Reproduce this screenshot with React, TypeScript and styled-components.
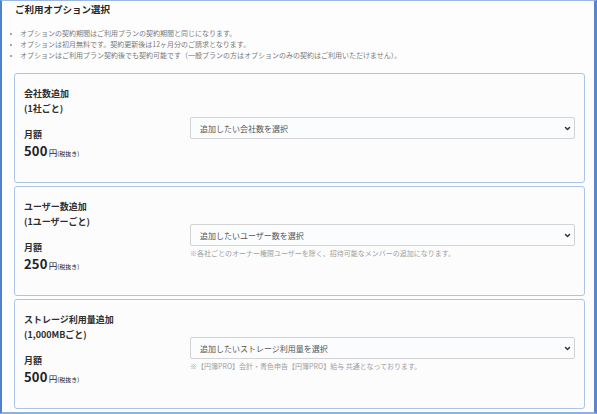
import React from "react";
import styled, { createGlobalStyle } from "styled-components";

const Global = createGlobalStyle`
  html, body { margin: 0; padding: 0; background: #ffffff; }
  body { font-family: "Noto Sans CJK JP", "Noto Sans", sans-serif; }
  * { box-sizing: border-box; }
`;

const Frame = styled.div`
  width: 597px;
  height: 414px;
  overflow: hidden;
  background: #fdfdfd;
  border-left: 2px solid #4f82cc;
  border-top: 1px solid #9bb8e4;
  border-right: 3px solid #5a86c8;
  border-bottom: 2px solid #8fb0e0;
  padding: 1px 9px 0 12px;
`;

const Heading = styled.h2`
  margin: 0;
  padding-left: 1px;
  font-size: 9.5px;
  line-height: 14px;
  font-weight: 700;
  color: #262626;
`;

const Notes = styled.ul`
  list-style: none;
  margin: 12px 0 12px -4px;
  padding: 0;
`;

const NoteItem = styled.li`
  display: flex;
  align-items: center;
  gap: 8px;
  height: 11px;
  font-size: 7px;
  line-height: 11px;
  color: #7a7a7a;
  white-space: nowrap;
`;

const Dot = styled.span`
  width: 2px;
  height: 2px;
  border-radius: 50%;
  background: #8a8a8a;
  flex: none;
`;

const Cards = styled.div`
  display: flex;
  flex-direction: column;
  gap: 3px;
`;

const Card = styled.section`
  display: grid;
  grid-template-columns: 166px 1fr;
  height: 110px;
  padding: 12px 9px 0 9px;
  border: 1px solid #abc5e8;
  border-radius: 3px;
  background: #fcfcfc;
  flex: none;
`;

const Info = styled.div`
  display: flex;
  flex-direction: column;
  color: #2e2e2e;
`;

const Label = styled.div`
  height: 15px;
  font-size: 9px;
  line-height: 15px;
  font-weight: 700;
`;

const Monthly = styled(Label)`
  margin-top: 11px;
`;

const Price = styled.div`
  display: flex;
  align-items: baseline;
  height: 18px;
  line-height: 18px;
  color: #222;
`;

const Amount = styled.span`
  font-size: 13px;
  font-weight: 700;
  letter-spacing: 0.2px;
`;

const Yen = styled.span`
  font-size: 8.5px;
  margin-left: 1px;
`;

const Tax = styled.span`
  font-size: 6px;
`;

const Control = styled.div`
  display: flex;
  flex-direction: column;
  justify-content: center;
  margin-top: -12px;
`;

const SelectWrap = styled.div`
  position: relative;
`;

const Select = styled.select`
  appearance: none;
  -webkit-appearance: none;
  display: block;
  width: 100%;
  height: 22px;
  padding: 0 20px 0 9px;
  border: 1px solid #d3d3d3;
  border-radius: 2px;
  background: #fbfcfd;
  font-family: "Noto Sans CJK JP", "Noto Sans", sans-serif;
  font-size: 8px;
  color: #555;
  outline: none;
`;

const Chevron = styled.svg`
  position: absolute;
  right: 4px;
  top: 50%;
  width: 7px;
  height: 7px;
  margin-top: -3.5px;
  pointer-events: none;
`;

const Hint = styled.div`
  margin-top: 2px;
  height: 10px;
  font-size: 7px;
  line-height: 10px;
  color: #a0a0a0;
  white-space: nowrap;
`;

type Option = {
  label: string;
  unit: string;
  price: string;
  placeholder: string;
  hint?: string;
};

const options: Option[] = [
  {
    label: "会社数追加",
    unit: "(1社ごと)",
    price: "500",
    placeholder: "追加したい会社数を選択",
  },
  {
    label: "ユーザー数追加",
    unit: "(1ユーザーごと)",
    price: "250",
    placeholder: "追加したいユーザー数を選択",
    hint: "※各社ごとのオーナー権限ユーザーを除く、招待可能なメンバーの追加になります。",
  },
  {
    label: "ストレージ利用量追加",
    unit: "(1,000MBごと)",
    price: "500",
    placeholder: "追加したいストレージ利用量を選択",
    hint: "※【円簿PRO】会計・青色申告【円簿PRO】給与 共通となっております。",
  },
];

const notes = [
  "オプションの契約期間はご利用プランの契約期間と同じになります。",
  "オプションは初月無料です。契約更新後は12ヶ月分のご請求となります。",
  "オプションはご利用プラン契約後でも契約可能です（一般プランの方はオプションのみの契約はご利用いただけません）。",
];

export default function App() {
  return (
    <>
      <Global />
      <Frame>
        <Heading>ご利用オプション選択</Heading>
        <Notes>
          {notes.map((n) => (
            <NoteItem key={n}>
              <Dot />
              {n}
            </NoteItem>
          ))}
        </Notes>
        <Cards>
          {options.map((o) => (
            <Card key={o.label}>
              <Info>
                <Label>{o.label}</Label>
                <Label>{o.unit}</Label>
                <Monthly>月額</Monthly>
                <Price>
                  <Amount>{o.price}</Amount>
                  <Yen>円</Yen>
                  <Tax>(税抜き)</Tax>
                </Price>
              </Info>
              <Control>
                <SelectWrap>
                  <Select defaultValue="">
                    <option value="">{o.placeholder}</option>
                  </Select>
                  <Chevron viewBox="0 0 7 7">
                    <path d="M1.5 2.5 L3.5 4.5 L5.5 2.5" fill="none" stroke="#333" strokeWidth="1.5" strokeLinecap="round" strokeLinejoin="round" />
                  </Chevron>
                </SelectWrap>
                {o.hint && <Hint>{o.hint}</Hint>}
              </Control>
            </Card>
          ))}
        </Cards>
      </Frame>
    </>
  );
}
